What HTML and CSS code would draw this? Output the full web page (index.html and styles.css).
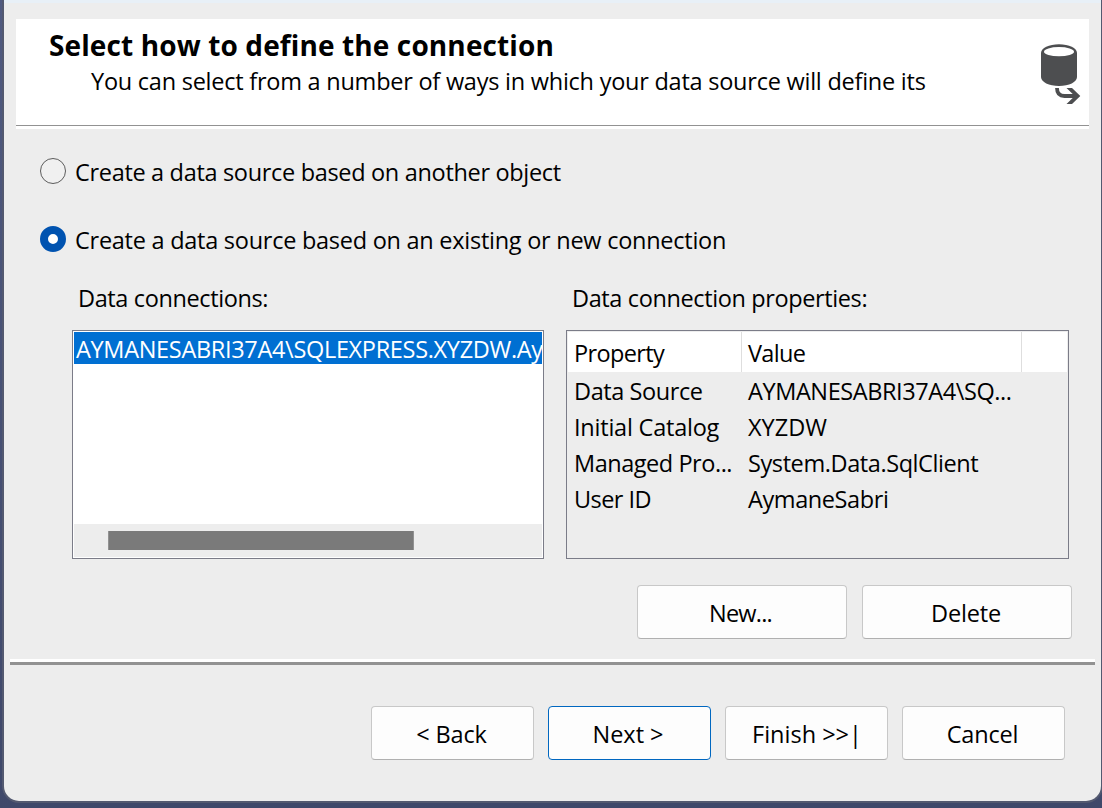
FILE: index.html
```html
<!DOCTYPE html>
<html lang="en">
<head>
<meta charset="utf-8">
<title>Select how to define the connection</title>
<link rel="stylesheet" href="styles.css">
</head>
<body>
<main class="dialog">
  <header class="banner">
    <div class="banner-text">
      <h1 class="title">Select how to define the connection</h1>
      <p class="subtitle">You can select from a number of ways in which your data source will define its</p>
    </div>
    <svg class="banner-icon" width="40" height="62" viewBox="0 0 40 62">
      <path d="M0 9C0 4 8 .2 18 .2S36 4 36 9v24c0 5-8 9-18 9S0 38 0 33z" fill="#4d4e50"/>
      <ellipse cx="18" cy="7.700" rx="15" ry="4.600" fill="#fff"/>
      <path d="M16 44c0 5.500 3 8 7.500 8H37" fill="none" stroke="#4d4e50" stroke-width="3.800"/>
      <path d="M25.500 44h5.500l8.300 8-8.300 8h-5.500l8.300-8z" fill="#4d4e50"/>
    </svg>
  </header>
  <section class="options">
    <label class="option"><span class="radio"></span><span class="t-object">Create a data source based on another object</span></label>
    <label class="option"><span class="radio checked"></span><span class="t-connection">Create a data source based on an existing or new connection</span></label>
  </section>
  <section class="panels">
    <div class="panel connections">
      <h2 class="label">Data connections:</h2>
      <div class="listbox">
        <div class="item">AYMANESABRI37A4\SQLEXPRESS.XYZDW.Ay</div>
        <div class="scrollbar"><div class="thumb"></div></div>
      </div>
    </div>
    <div class="panel properties">
      <h2 class="label">Data connection properties:</h2>
      <div class="table">
        <div class="row head"><span>Property</span><span>Value</span><span></span></div>
        <div class="row"><span>Data Source</span><span>AYMANESABRI37A4\SQ...</span></div>
        <div class="row"><span class="t-catalog">Initial Catalog</span><span class="t-db">XYZDW</span></div>
        <div class="row"><span class="t-provider">Managed Pro...</span><span>System.Data.SqlClient</span></div>
        <div class="row"><span class="t-user">User ID</span><span>AymaneSabri</span></div>
      </div>
    </div>
  </section>
  <div class="actions">
    <button class="btn wide t-new">New...</button>
    <button class="btn wide t-delete">Delete</button>
  </div>
  <div class="separator"></div>
  <footer class="footer">
    <button class="btn t-back">&lt; Back</button>
    <button class="btn primary t-next">Next &gt;</button>
    <button class="btn t-finish">Finish &gt;&gt;|</button>
    <button class="btn t-cancel">Cancel</button>
  </footer>
</main>
</body>
</html>
```
FILE: styles.css
```css
* { box-sizing: border-box; }
body {
  margin: 0;
  height: 808px;
  overflow: hidden;
  background: linear-gradient(#505a80, #3f486a);
  font: 23.5px/32px "Open Sans", "Noto Sans", sans-serif;
  color: #000;
}
h1, h2, p { margin: 0; font-weight: 400; font-size: inherit; white-space: nowrap; }
.dialog {
  width: 1097px;
  height: 801px;
  margin-left: 4px;
  background: #ededed;
  border-top: 3px solid #e8f0f7;
  border-radius: 0 0 15px 15px;
  box-shadow: 0 0 0 2px #535970;
  padding-top: 16px;
}
.banner {
  display: flex;
  justify-content: space-between;
  height: 107px;
  margin: 0 12px;
  padding: 9px 8px 0 33px;
  background: #fff;
  border-bottom: 1px solid #929292;
  box-shadow: 0 3px 0 #fff;
}
.title { font-weight: 700; font-size: 28px; line-height: 34px; letter-spacing: 0.12px; }
.subtitle { margin: 3px 0 0 42px; letter-spacing: -0.24px; }
.banner-icon { flex: none; margin-top: 16px; }
.options { display: flex; flex-direction: column; gap: 36px; margin: 30px 0 0 36px; }
.option { display: flex; gap: 9px; white-space: nowrap; }
.t-object { letter-spacing: -0.32px; }
.t-connection { letter-spacing: -0.26px; }
.radio {
  width: 26px;
  height: 26px;
  margin-top: 2px;
  border: 1.5px solid #5c5c5c;
  border-radius: 50%;
  background: #f0f0f0;
}
.radio.checked { border: 8px solid #0053b0; background: #fff; }
.panels { display: flex; gap: 22px; margin: 26px 32px 0 68px; }
.connections { width: 472px; }
.properties { width: 503px; }
.label { padding-left: 6px; margin-bottom: 16px; letter-spacing: -0.38px; }
.listbox, .table { height: 229px; border: 1px solid #7b7c88; background: #fff; padding: 1px; }
.listbox { display: flex; flex-direction: column; justify-content: space-between; }
.item {
  height: 32px;
  overflow: hidden;
  white-space: nowrap;
  padding-left: 2px;
  line-height: 34px;
  letter-spacing: -0.32px;
  background: #006fd2;
  color: #fff;
}
.scrollbar { height: 33px; padding: 7px 34px; background: #ededed; }
.thumb { width: 306px; height: 19px; background: #7a7a7a; border: solid #929292; border-width: 0 1px; }
.table { background: #ededed; letter-spacing: -0.41px; }
.row { display: grid; grid-template-columns: 174px 280px 1fr; height: 36px; line-height: 36px; white-space: nowrap; }
.row > span { padding-left: 6px; }
.row.head { height: 40px; margin-bottom: 1px; line-height: 42px; letter-spacing: -0.65px; background: #fff; }
.head > span + span { height: 40px; border-left: 1px solid #dedede; margin-left: -1px; }
.t-catalog { letter-spacing: -0.22px; }
.t-db { letter-spacing: 0; }
.t-provider { letter-spacing: -0.46px; }
.t-user { letter-spacing: -0.57px; }
.actions { display: flex; justify-content: flex-end; gap: 15px; margin: 26px 29px 0 0; }
.btn {
  width: 163px;
  height: 54px;
  padding: 2px 0 0;
  border: 1px solid #c8c8c8;
  border-bottom-color: #b0b0b0;
  border-radius: 4px;
  background: #fdfdfd;
  color: #000;
  font: inherit;
}
.btn.wide { width: 210px; }
.btn.primary { border-color: #0067c0; }
.t-new { letter-spacing: -0.8px; padding-right: 3px; }
.t-delete, .t-back, .t-cancel { letter-spacing: -0.18px; padding-right: 2px; }
.t-next { padding-right: 3px; }
.t-finish { padding-left: 1px; }
.separator { height: 6px; margin: 20px 6px 0; background: linear-gradient(#fff 50%, #929292 50%); }
.footer { display: flex; justify-content: flex-end; gap: 14px; margin: 41px 36px 0 0; }
```
